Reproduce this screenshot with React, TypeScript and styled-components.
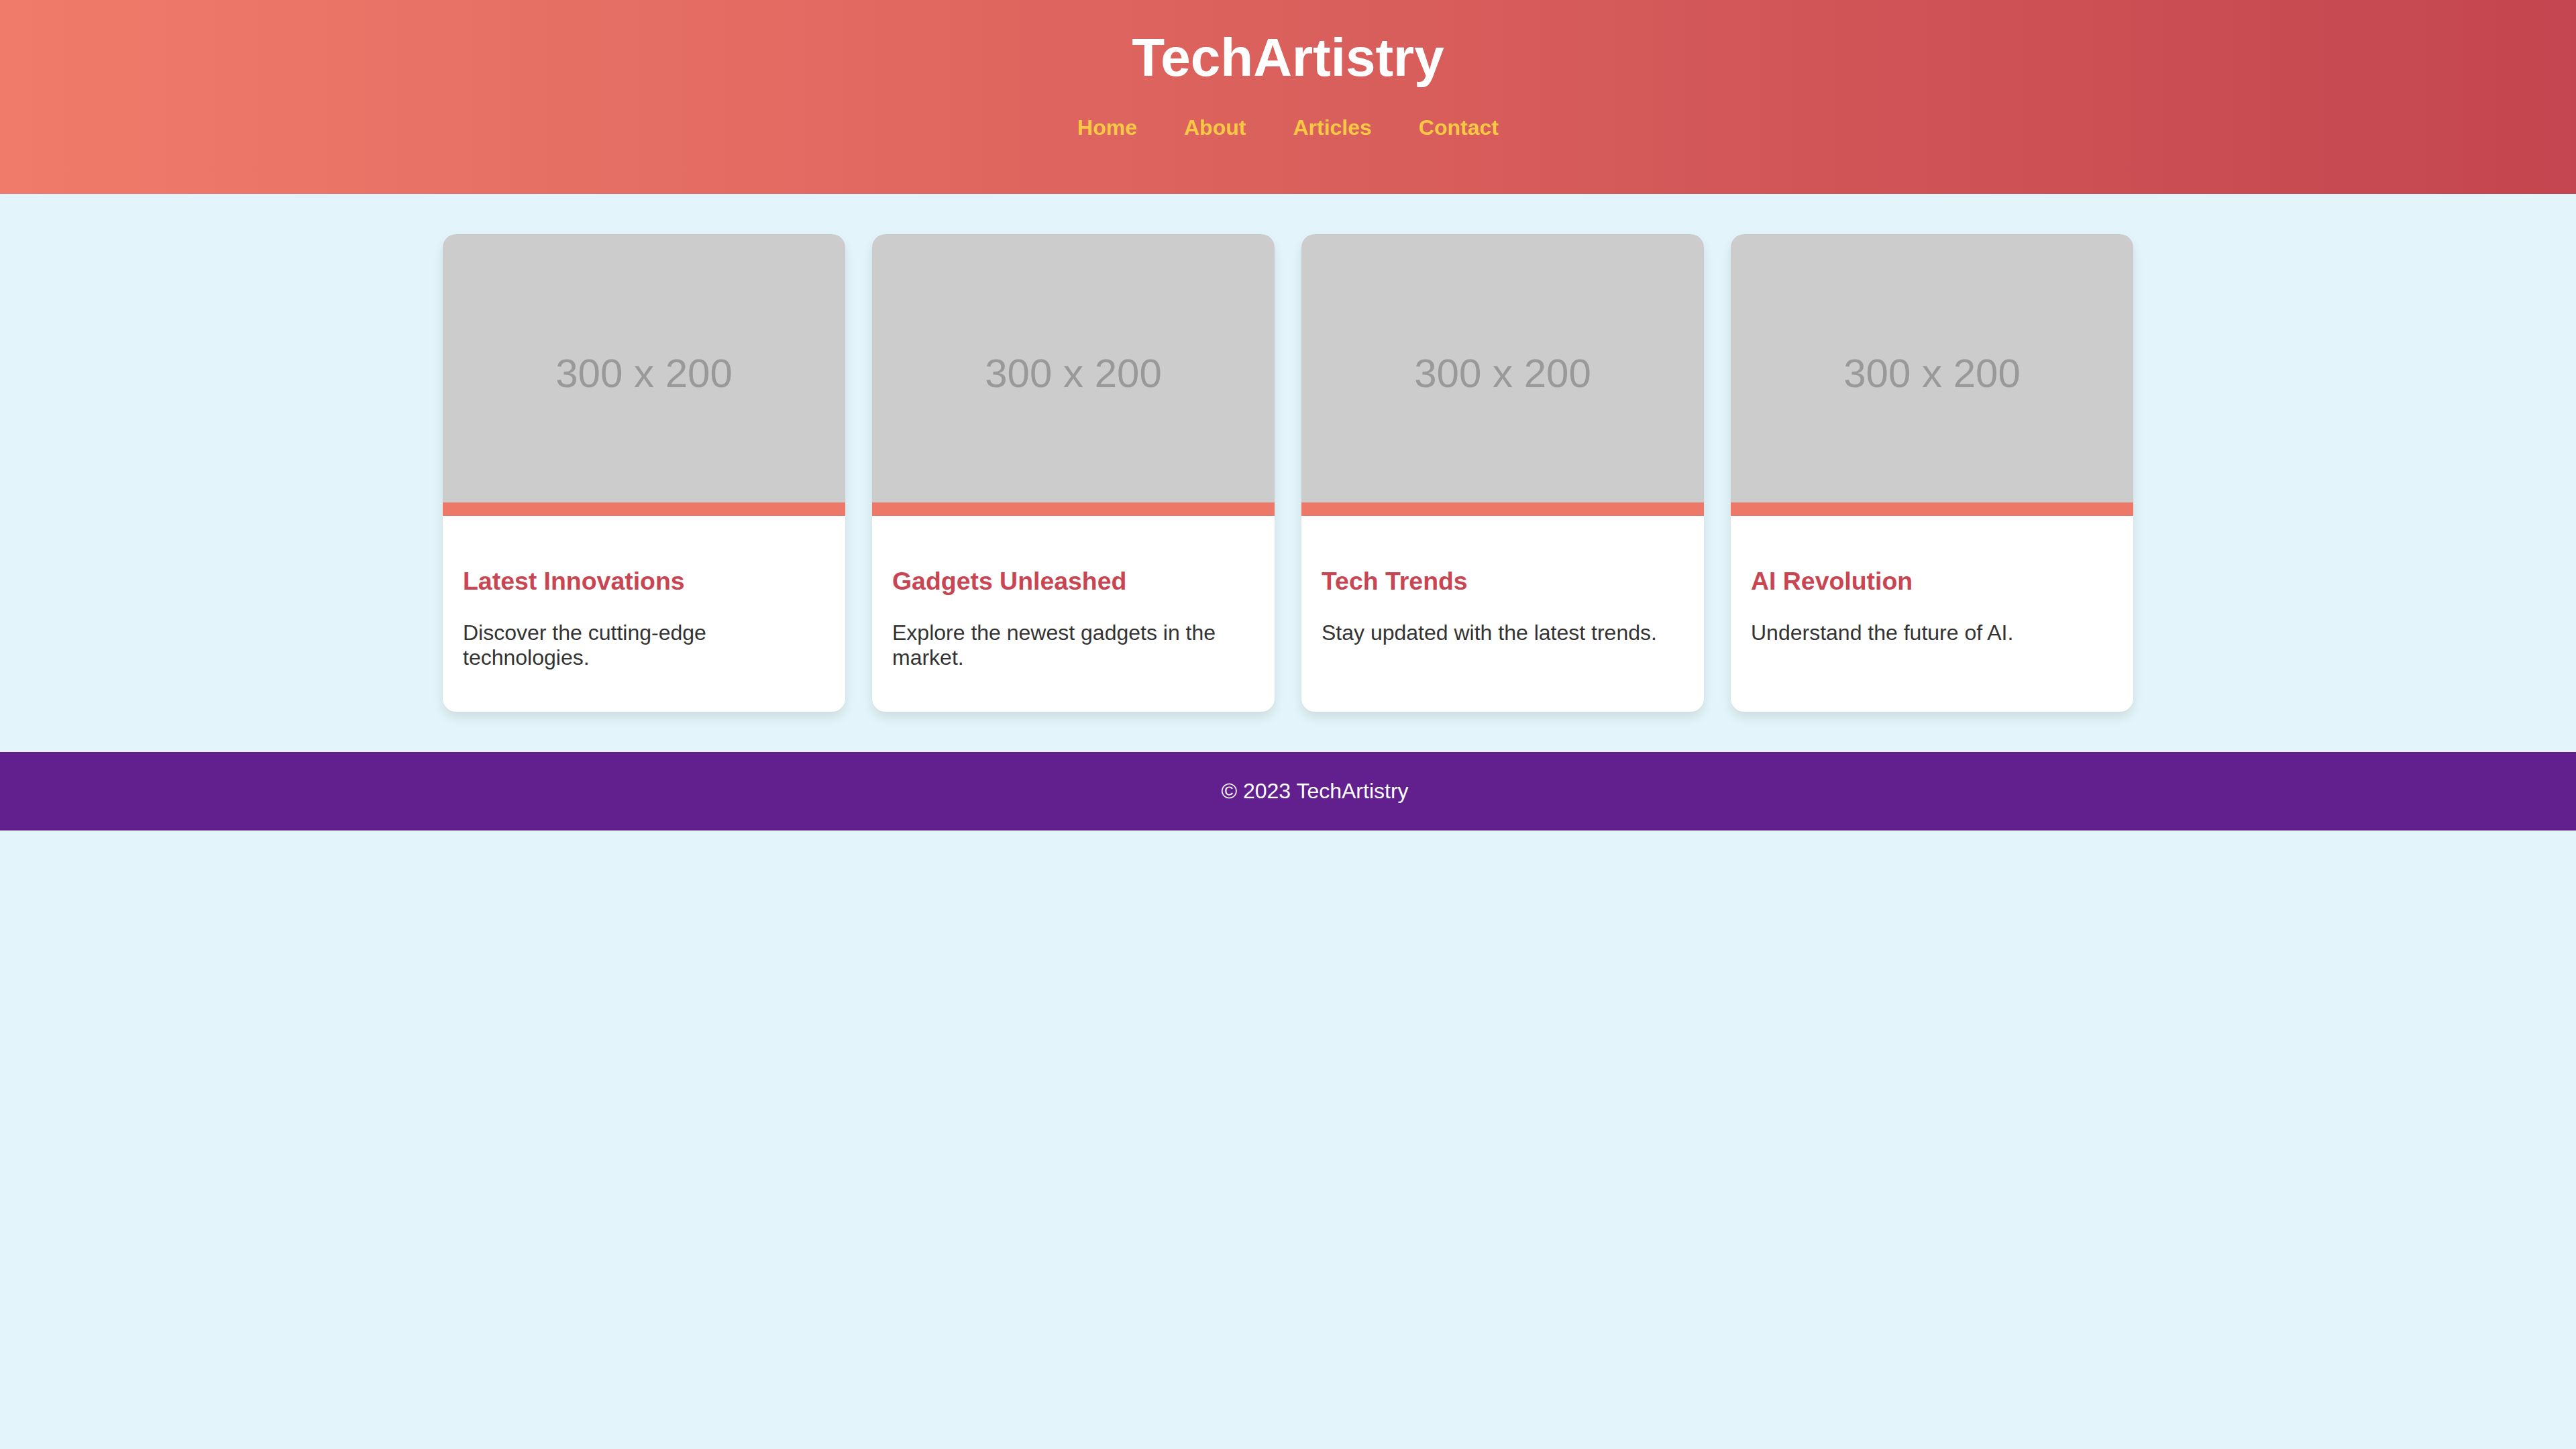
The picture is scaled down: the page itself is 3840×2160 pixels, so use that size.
import React from "react";
import styled, { createGlobalStyle } from "styled-components";

const GlobalStyle = createGlobalStyle`
  html, body {
    margin: 0;
    padding: 0;
  }
  body {
    background: #e3f5fa;
    font-family: "Liberation Sans", Arial, Helvetica, sans-serif;
    color: #333;
  }
  * { box-sizing: border-box; }
`;

const Header = styled.header`
  background: linear-gradient(90deg, #f07b6a 0%, #c4454f 100%);
  padding: 40px 0;
  text-align: center;
`;

const Title = styled.h1`
  margin: 0;
  font-size: 80px;
  font-weight: 700;
  color: #ffffff;
  line-height: normal;
`;

const Nav = styled.nav`
  margin: 40px 0;
  display: flex;
  justify-content: center;
  gap: 70px;
`;

const NavLink = styled.a`
  font-size: 32px;
  font-weight: 700;
  color: #f7c843;
  text-decoration: none;
  line-height: normal;
`;

const Main = styled.main`
  padding: 60px 0;
  display: flex;
  justify-content: center;
  gap: 40px;
`;

const Card = styled.article`
  width: 600px;
  background: #ffffff;
  border-radius: 20px;
  overflow: hidden;
  box-shadow: 0 8px 16px rgba(0, 0, 0, 0.1);
  display: flex;
  flex-direction: column;
`;

const Placeholder = styled.div`
  height: 400px;
  background: #cccccc;
  display: flex;
  align-items: center;
  justify-content: center;
  padding-top: 14px;
  font-size: 60px;
  color: #999999;
  font-family: "Liberation Sans", Arial, sans-serif;
`;

const Bar = styled.div`
  height: 20px;
  background: #ee7868;
`;

const Content = styled.div`
  padding: 30px;
`;

const CardTitle = styled.h3`
  margin: 46px 0 37px;
  font-size: 37.44px;
  font-weight: 700;
  color: #c94551;
  line-height: normal;
`;

const CardText = styled.p`
  margin: 0 0 32px;
  font-size: 32px;
  line-height: normal;
  color: #333333;
`;

const Footer = styled.footer`
  background: #62208f;
  color: #ffffff;
  text-align: center;
  font-size: 32px;
  line-height: normal;
  padding: 40px 0 40px 80px;
`;

const cards = [
  { title: "Latest Innovations", text: "Discover the cutting-edge technologies." },
  { title: "Gadgets Unleashed", text: "Explore the newest gadgets in the market." },
  { title: "Tech Trends", text: "Stay updated with the latest trends." },
  { title: "AI Revolution", text: "Understand the future of AI." },
];

export default function App() {
  return (
    <>
      <GlobalStyle />
      <Header>
        <Title>TechArtistry</Title>
        <Nav>
          <NavLink href="#">Home</NavLink>
          <NavLink href="#">About</NavLink>
          <NavLink href="#">Articles</NavLink>
          <NavLink href="#">Contact</NavLink>
        </Nav>
      </Header>
      <Main>
        {cards.map((c) => (
          <Card key={c.title}>
            <Placeholder>300 x 200</Placeholder>
            <Bar />
            <Content>
              <CardTitle>{c.title}</CardTitle>
              <CardText>{c.text}</CardText>
            </Content>
          </Card>
        ))}
      </Main>
      <Footer>© 2023 TechArtistry</Footer>
    </>
  );
}
